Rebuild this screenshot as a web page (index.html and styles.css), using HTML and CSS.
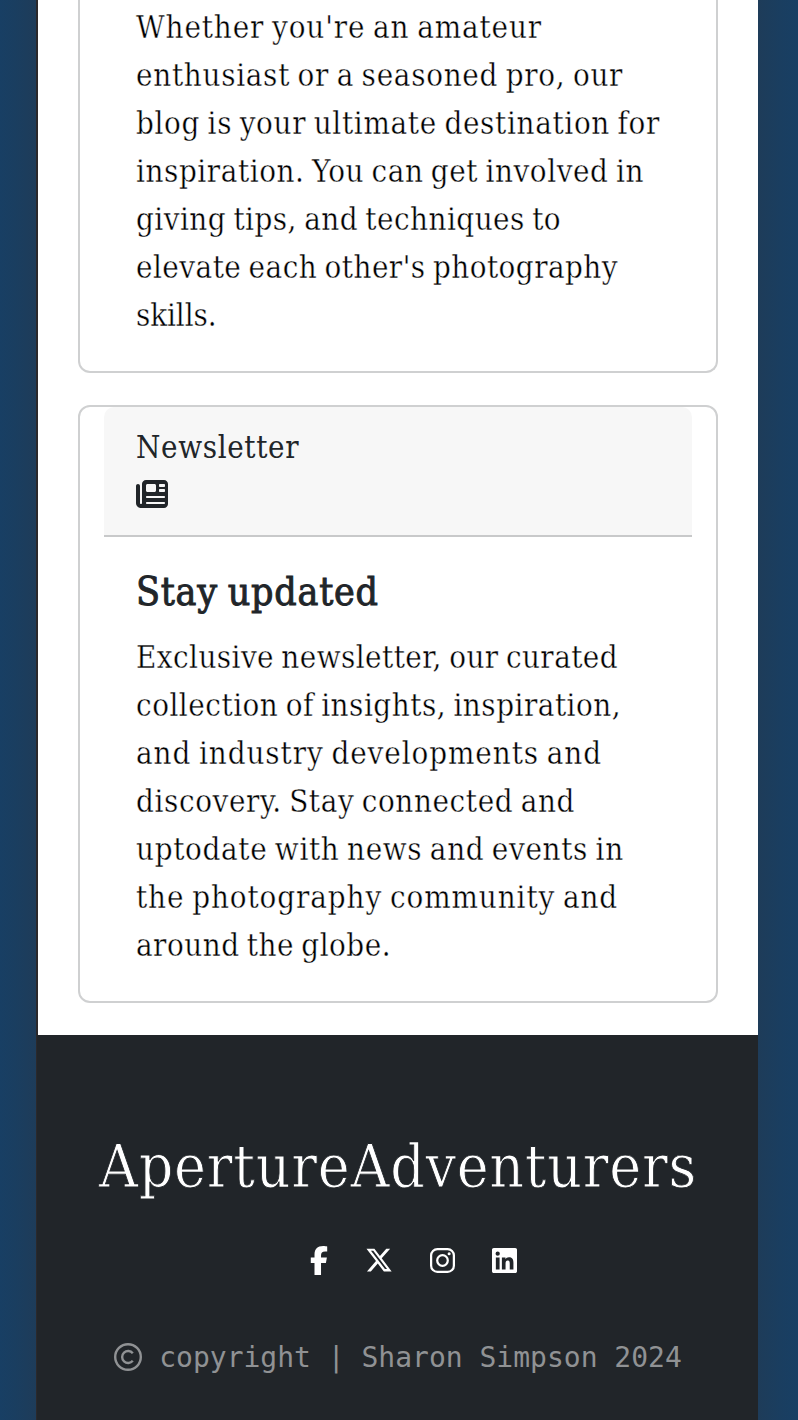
FILE: index.html
```
<!DOCTYPE html>
<html lang="en">
<head>
<meta charset="utf-8">
<title>ApertureAdventurers</title>
<link rel="stylesheet" href="styles.css">
</head>
<body>
<div class="page">
  <main class="cards">
    <section class="card card-top">
      <p class="copy">
        <span style="letter-spacing:.88px">Whether you're an amateur</span>
        <span style="letter-spacing:.71px">enthusiast or a seasoned pro, our</span>
        <span style="letter-spacing:.67px">blog is your ultimate destination for</span>
        <span style="letter-spacing:.57px">inspiration. You can get involved in</span>
        <span style="letter-spacing:.47px">giving tips, and techniques to</span>
        <span style="letter-spacing:.47px">elevate each other's photography</span>
        <span style="letter-spacing:-.1px">skills.</span>
      </p>
    </section>
    <section class="card">
      <header class="card-head">
        <div class="label">Newsletter</div>
        <svg class="news" viewBox="0 0 512 448"><path fill-rule="evenodd" d="M96 64c0-35 29-64 64-64h288c35 0 64 29 64 64v320c0 35-29 64-64 64H80c-44 0-80-36-80-80V96c0-18 14-32 32-32s32 14 32 32v272c0 9 7 16 16 16s16-7 16-16zM160 88v80c0 13 11 24 24 24h112c13 0 24-11 24-24V88c0-13-11-24-24-24H184c-13 0-24 11-24 24m224-24c-9 0-16 7-16 16v16c0 9 7 16 16 16h64c9 0 16-7 16-16V80c0-9-7-16-16-16zm0 80c-9 0-16 7-16 16v16c0 9 7 16 16 16h64c9 0 16-7 16-16v-16c0-9-7-16-16-16zM176 256c-9 0-16 7-16 16s7 16 16 16h272c9 0 16-7 16-16s-7-16-16-16zm0 96c-9 0-16 7-16 16s7 16 16 16h272c9 0 16-7 16-16s-7-16-16-16z"/></svg>
      </header>
      <h5 class="title">Stay updated</h5>
      <p class="copy">
        <span style="letter-spacing:.44px">Exclusive newsletter, our curated</span>
        <span style="letter-spacing:.51px">collection of insights, inspiration,</span>
        <span style="letter-spacing:.92px">and industry developments and</span>
        <span style="letter-spacing:.61px">discovery. Stay connected and</span>
        <span style="letter-spacing:.67px">uptodate with news and events in</span>
        <span style="letter-spacing:.91px">the photography community and</span>
        <span style="letter-spacing:.49px">around the globe.</span>
      </p>
    </section>
  </main>
  <footer class="footer">
    <div class="brand">ApertureAdventurers</div>
    <nav class="social">
      <svg viewBox="0 0 320 512" width="18" height="29"><path d="M80 299.3V512h116V299.3h86.500l18-97.800H196v-34.600c0-51.700 20.300-71.500 72.700-71.500 16.300 0 29.400.4 37 1.200V7.900C291.400 4 256.400 0 236.200 0 129.300 0 80 50.500 80 159.400v42.100H14v97.800z"/></svg>
      <svg viewBox="0 0 512 512" width="28" height="28"><path d="M389.200 48h70.600L305.600 224.200 487 464H345L233.700 318.600 106.500 464H35.800l164.900-188.500L26.800 48h145.600l100.500 132.900zm-24.800 373.800h39.100L151.100 88h-42z"/></svg>
      <svg viewBox="0 0 448 448" width="25" height="25"><rect x="20" y="20" width="408" height="408" rx="112" fill="none" stroke="#fff" stroke-width="40"/><circle cx="224" cy="224" r="95" fill="none" stroke="#fff" stroke-width="40"/><circle cx="343" cy="105" r="27"/></svg>
      <svg viewBox="0 0 448 448" width="25" height="25"><path fill-rule="evenodd" d="M416 0H32C14 0 0 15 0 32v384c0 17 14 32 32 32h384c18 0 32-15 32-32V32c0-17-14-32-32-32M136 384H69V170h67zM102 141a38 38 0 1 1 0-77 38 38 0 0 1 0 77m282 243h-66V280c0-25-1-57-35-57s-40 27-40 55v106h-66V170h64v29h1c9-17 30-35 62-35 67 0 80 45 80 103z"/></svg>
    </nav>
    <div class="legal">
      <svg viewBox="0 0 28 28" width="28" height="28"><circle cx="14" cy="14" r="12.800"/><path d="M18.800 10.200A6 6 0 1 0 18.800 17.800"/></svg>
      <span>copyright | Sharon Simpson 2024</span>
    </div>
  </footer>
</div>
</body>
</html>
```
FILE: styles.css
```
* { box-sizing: border-box; }
html { height: 1420px; overflow: hidden; }
body {
  margin: 0;
  height: 1420px;
  padding: 0 40px 0 36px;
  overflow: hidden;
  background: linear-gradient(90deg, #183f64 0, #1a3e60 16px, #1e3c59 36px, #1e3c59 758px, #1a3e60 780px, #183f64 798px);
  color: #212529;
  font-family: "DejaVu Serif Condensed", "DejaVu Serif", serif;
  font-stretch: condensed;
}
.page {
  display: flex;
  flex-direction: column;
  height: 1420px;
  border-left: 2px solid #2b292b;
  background: #fff;
}
.cards {
  display: flex;
  flex-direction: column;
  gap: 32px;
  padding: 0 40px 32px;
}
.card {
  padding: 0 24px 32px;
  border: 2px solid #cfd0d1;
  border-radius: 12px;
}
.card-top {
  padding-top: 3px;
  border-top: 0;
  border-radius: 0 0 12px 12px;
}
.copy {
  margin: 0;
  padding: 0 0 0 32px;
  color: #000;
  font-size: 31px;
  line-height: 48px;
  word-spacing: -2px;
  -webkit-text-stroke: .35px #fff;
}
.copy span {
  display: block;
  white-space: nowrap;
}
.card-head {
  height: 130px;
  padding: 16px 32px;
  border-bottom: 2px solid #c8c9ca;
  border-radius: 10px 10px 0 0;
  background: #f7f7f7;
}
.label {
  font-size: 31px;
  line-height: 48px;
  letter-spacing: .64px;
}
.news {
  display: block;
  width: 32px;
  height: 28px;
  margin-top: 9px;
  fill: #212529;
}
.title {
  margin: 31px 0 17px;
  padding-left: 32px;
  font-size: 39px;
  font-weight: 400;
  line-height: 48px;
  letter-spacing: .75px;
  word-spacing: -2px;
  -webkit-text-stroke: .9px #212529;
}
.footer {
  display: flex;
  flex: 1;
  flex-direction: column;
  align-items: center;
  margin-left: -1px;
  padding-left: 1px;
  background: #212529;
}
.brand {
  margin-top: 93px;
  color: #fff;
  font-size: 60px;
  line-height: 76px;
  letter-spacing: .74px;
  -webkit-text-stroke: .8px #212529;
}
.social {
  display: flex;
  align-items: center;
  gap: 37px;
  height: 30px;
  margin: 41px 0 0 31px;
  fill: #fff;
}
.legal {
  display: flex;
  align-items: center;
  gap: 17px;
  height: 40px;
  margin-top: 62px;
  color: #909294;
  font: 28px/40px "DejaVu Sans Mono", monospace;
  white-space: nowrap;
}
.legal span {
  padding-top: 2px;
}
.legal svg {
  fill: none;
  stroke: #909294;
  stroke-width: 2.4;
}
```
